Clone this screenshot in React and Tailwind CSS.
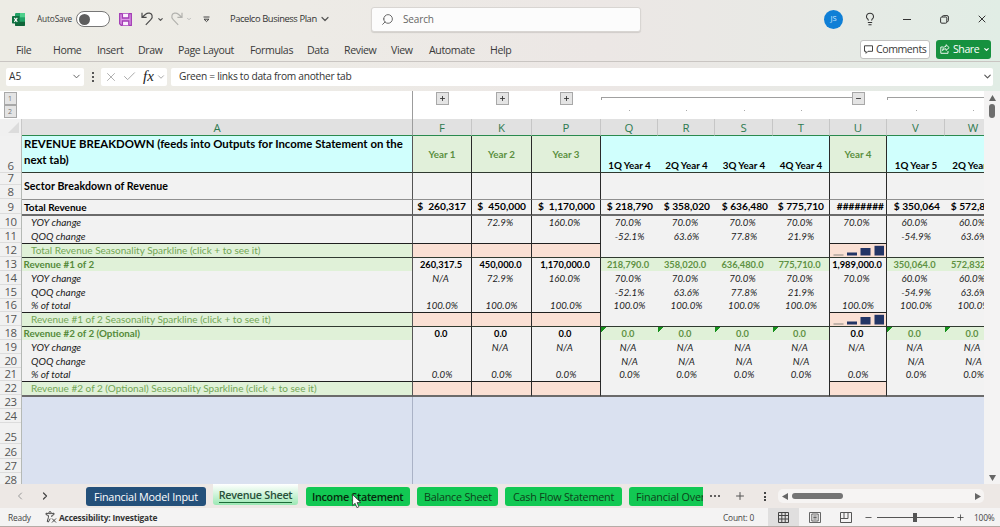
import React from "react";
import { ChevronDown, ChevronLeft, ChevronRight, X, Check, Search, Lightbulb, Minus, Plus } from "lucide-react";

const COLS = [
  { id: "F", w: "w-[59px]", kind: "year", line: true },
  { id: "K", w: "w-[60px]", kind: "year", line: true },
  { id: "P", w: "w-[69px]", kind: "year", line: true },
  { id: "Q", w: "w-[57px]", kind: "quarter" },
  { id: "R", w: "w-[57px]", kind: "quarter" },
  { id: "S", w: "w-[58px]", kind: "quarter" },
  { id: "T", w: "w-[57px]", kind: "quarter", line: true },
  { id: "U", w: "w-[57px]", kind: "year", line: true },
  { id: "V", w: "w-[58px]", kind: "quarter" },
  { id: "W", w: "w-[57px]", kind: "quarter" },
];

const yoy = ["70.0%", "70.0%", "70.0%", "70.0%", "70.0%", "60.0%", "60.0%"];
const qoq = ["", "", "", "-52.1%", "63.6%", "77.8%", "21.9%", "", "-54.9%", "63.6%"];
const na7 = Array(7).fill("N/A");

const ROWS = [
  { type: "head", h: "h-[37px]", label: "", cells: ["Year 1", "Year 2", "Year 3", "1Q Year 4", "2Q Year 4", "3Q Year 4", "4Q Year 4", "Year 4", "1Q Year 5", "2Q Year 5"], rule: "thin" },
  { type: "section", h: "h-[27px]", label: "Sector Breakdown of Revenue", cells: Array(10).fill(""), rule: "gray" },
  { type: "total", h: "h-[16px]", label: "Total Revenue", cells: ["$  260,317", "$  450,000", "$  1,170,000", "$ 218,790", "$ 358,020", "$ 636,480", "$ 775,710", "########", "$ 350,064", "$ 572,832"], rule: "thick" },
  { type: "pct", h: "h-[13px]", label: "YOY change", shift: true, cells: ["", "72.9%", "160.0%", ...yoy] },
  { type: "pct", h: "h-[15px]", label: "QOQ change", cells: qoq, rule: "years" },
  { type: "spark", h: "h-[14px]", label: "Total Revenue Seasonality Sparkline (click + to see it)", cells: Array(10).fill(""), chart: true, rule: "thin" },
  { type: "rev", h: "h-[13px]", label: "Revenue #1 of 2", cells: ["260,317.5", "450,000.0", "1,170,000.0", "218,790.0", "358,020.0", "636,480.0", "775,710.0", "1,989,000.0", "350,064.0", "572,832.0"] },
  { type: "pct", h: "h-[14px]", label: "YOY change", shift: true, cells: ["N/A", "72.9%", "160.0%", ...yoy] },
  { type: "pct", h: "h-[14px]", label: "QOQ change", cells: qoq },
  { type: "pct", h: "h-[14px]", label: "% of total", cells: Array(10).fill("100.0%"), rule: "years" },
  { type: "spark", h: "h-[14px]", label: "Revenue #1 of 2 Seasonality Sparkline (click + to see it)", cells: Array(10).fill(""), chart: true, rule: "thin" },
  { type: "rev", h: "h-[13px]", label: "Revenue #2 of 2 (Optional)", cells: Array(10).fill("0.0"), flag: true },
  { type: "pct", h: "h-[14px]", label: "YOY change", shift: true, cells: ["", "N/A", "N/A", ...na7] },
  { type: "pct", h: "h-[14px]", label: "QOQ change", cells: ["", "", "", "N/A", "N/A", "N/A", "N/A", "", "N/A", "N/A"] },
  { type: "pct", h: "h-[14px]", label: "% of total", cells: Array(10).fill("0.0%"), rule: "years" },
  { type: "spark", h: "h-[15px]", label: "Revenue #2 of 2 (Optional) Seasonality Sparkline (click + to see it)", cells: Array(10).fill(""), rule: "thick" },
];

const RULES = {
  thin: "border-b border-b-[#303a30]",
  gray: "border-b border-b-[#8f8f8f]",
  thick: "border-b-2 border-b-[#6b6b6b]",
};

function ruleFor(rule, year) {
  if (!rule) return "";
  if (rule === "years") return year ? "border-b border-b-[#1f1f1f]" : "pb-px";
  return RULES[rule];
}

const ROW_NUMBERS = [
  ["6", "h-[37px]"], ["7", "h-[12px]"], ["8", "h-[14px]"], ["9", "h-[15px]"], ["10", "h-[15px]"], ["11", "h-[14px]"],
  ["12", "h-[14px]"], ["13", "h-[14px]"], ["14", "h-[14px]"], ["15", "h-[14px]"], ["16", "h-[13px]"], ["17", "h-[14px]"],
  ["18", "h-[14px]"], ["19", "h-[14px]"], ["20", "h-[14px]"], ["21", "h-[13px]"], ["22", "h-[14px]"], ["23", "h-[14px]"],
  ["24", "h-[14px]"], ["25", "h-[21px]"], ["26", "h-[15px]"], ["27", "h-[14px]"], ["28", "h-[14px]"],
];

function labelStyle(type) {
  if (type === "section") return "pl-[2px] font-bold text-[10.6px] tracking-[0.08px] text-black bg-[#f2f2f2]";
  if (type === "total") return "pl-[2px] font-bold text-[10px] text-black bg-[#f2f2f2]";
  if (type === "pct") return "pl-[9px] italic text-[10px] text-[#1c1c1c] bg-[#f2f2f2]";
  if (type === "rev") return "pl-[1.5px] font-bold text-[9.8px] text-[#558a3a] bg-[#e0f1d8]";
  return "pl-[9px] text-[10px] text-[#72a655] bg-[#e0f1d8]";
}

function cellStyle(row, year) {
  if (row.type === "head") return year ? "items-center justify-center bg-[#e1f0da] font-bold text-[9.8px] text-[#5a8f3e]" : "items-end justify-center bg-[#d0fffd] font-bold text-[9.8px] text-black";
  if (row.type === "total") return "items-center justify-end bg-[#f2f2f2] font-bold text-[10.2px] text-black";
  if (row.type === "spark") return year ? "items-center bg-[#fae0d4]" : "bg-[#f2f2f2]";
  if (row.type === "rev") return year ? "items-center justify-center pr-[2px] bg-[#f2f2f2] font-bold text-[9.3px] text-black" : "items-center justify-center pr-[3px] bg-[#e0f1d8] font-bold text-[9.3px] text-[#5f9244]";
  return "items-center justify-center bg-[#f2f2f2] italic text-[9.7px] text-[#222]";
}

function SparkBars() {
  return (
    <svg className="block h-[13px] w-[56px]" viewBox="0 0 56 13">
      <rect x="3.5" y="10.5" width="10" height="1" fill="#8a8580" />
      <rect x="17" y="8.5" width="10" height="3" fill="#233566" />
      <rect x="30.5" y="4" width="10" height="7.5" fill="#233566" />
      <rect x="44.5" y="1.8" width="9.5" height="9.7" fill="#233566" />
    </svg>
  );
}

function SheetRow({ row }) {
  const total = row.type === "total";
  return (
    <div className={`flex shrink-0 ${row.h}`}>
      <div className={`flex w-[391px] shrink-0 items-center whitespace-nowrap border-r border-r-[#555] leading-[13px] ${row.type === "head" ? "bg-[#d0fffd] pb-[4px] pl-[2px] text-[11.4px] font-bold text-black" : labelStyle(row.type)} ${ruleFor(row.rule, true)}`}>
        {row.type === "head" ? (
          <span className="leading-[16px]">REVENUE BREAKDOWN (feeds into Outputs for Income Statement on the<br />next tab)</span>
        ) : row.label}
      </div>
      {COLS.map((c, i) => {
        const year = c.kind === "year";
        const quarterFlag = row.flag && !year;
        return (
          <div
            key={c.id}
            className={`flex shrink-0 whitespace-pre leading-[13px] ${c.w} ${cellStyle(row, year)} ${row.shift ? "pr-[3px]" : ""} ${total ? (c.id === "U" ? "pb-px pr-[2px]" : "pb-px pr-[5px]") : ""} ${c.line ? "border-r border-r-[#2a2a2a]" : ""} ${ruleFor(row.rule, year)} ${quarterFlag ? "bg-[linear-gradient(135deg,#16901c_3.6px,transparent_3.6px)]" : ""}`}
          >
            {row.chart && c.id === "U" ? <SparkBars /> : row.cells[i]}
          </div>
        );
      })}
    </div>
  );
}

function OutlineButton({ children }) {
  return <div className="flex h-[13px] w-[13px] shrink-0 items-center justify-center border border-[#a8a8a8] bg-[#e4e4e4] text-[#333]">{children}</div>;
}

function Outline() {
  return (
    <div className="flex h-[28px] shrink-0 bg-white">
      <div className="flex w-[413px] shrink-0 flex-col border-r border-r-[#9c9c9c] pl-[3.5px] pt-px">
        <OutlineButton><span className="text-[7px] leading-none text-[#777]">1</span></OutlineButton>
        <OutlineButton><span className="text-[7px] leading-none text-[#777]">2</span></OutlineButton>
      </div>
      {COLS.map((c) => {
        const collapsed = ["F", "K", "P"].includes(c.id);
        if (collapsed) {
          return (
            <div key={c.id} className={`flex shrink-0 justify-center pt-px ${c.w}`}>
              <OutlineButton><Plus size={7} strokeWidth={3} /></OutlineButton>
            </div>
          );
        }
        if (c.id === "U") {
          return (
            <div key={c.id} className={`flex shrink-0 pt-px ${c.w}`}>
              <div className="mt-[5px] h-px w-[22px] bg-[#a0a0a0]" />
              <OutlineButton><Minus size={7} strokeWidth={3} /></OutlineButton>
            </div>
          );
        }
        const first = c.id === "Q" || c.id === "V";
        return (
          <div key={c.id} className={`shrink-0 pt-[6px] ${c.w}`}>
            <div className={`h-[3px] border-t border-[#a0a0a0] ${first ? "border-l" : ""}`} />
            <div className="mx-auto mt-[10px] h-px w-px bg-[#aaa]" />
          </div>
        );
      })}
    </div>
  );
}

function ColumnHeaders() {
  return (
    <div className="flex h-[17px] shrink-0 text-[11.4px] leading-[16px] text-[#2d7a50]">
      <div className="flex w-[22px] shrink-0 items-end justify-end border-r border-r-[#c8c8c8] bg-[#f0f0f0] pb-[3px] pr-[2px]">
        <svg className="h-[11px] w-[11px]" viewBox="0 0 11 11"><path d="M11 0V11H0Z" fill="#dcdcdc" /></svg>
      </div>
      <div className="w-[391px] shrink-0 border-b border-r border-b-[#2a8a4e] border-r-[#9c9c9c] bg-[#e1e1e1] pt-px text-center">A</div>
      {COLS.map((c) => (
        <div key={c.id} className={`shrink-0 border-b border-r border-b-[#2a8a4e] border-r-[#c6c6c6] bg-[#e1e1e1] pt-px text-center ${c.w}`}>{c.id}</div>
      ))}
    </div>
  );
}

function TitleBar() {
  return (
    <div className="flex h-[38px] shrink-0 items-center text-[#333]">
      <div className="flex w-[37px] shrink-0 pl-[12px]">
        <svg className="h-[13px] w-[13px]" viewBox="0 0 13 13">
          <rect x="3" y="0" width="10" height="13" rx="1.2" fill="#21a366" />
          <rect x="8" y="0" width="5" height="4.3" fill="#4fd08c" />
          <path d="M3 8.7H13V12a1 1 0 0 1-1 1H4a1 1 0 0 1-1-1Z" fill="#11653a" />
          <rect x="0" y="3" width="7.6" height="7.6" rx="0.8" fill="#0f7040" />
          <path d="M2.3 4.8 5.3 8.8M5.3 4.8 2.3 8.8" stroke="#fff" strokeWidth="1.1" />
        </svg>
      </div>
      <div className="w-[39px] shrink-0 whitespace-nowrap text-[8.3px] tracking-[-0.15px] text-[#3c3c3c]">AutoSave</div>
      <div className="flex h-[16px] w-[34px] shrink-0 items-center rounded-full border border-[#777] bg-white pl-[2px]">
        <div className="h-[11px] w-[11px] rounded-full bg-[#5e5e5e]" />
      </div>
      <svg className="ml-[9px] h-[13px] w-[13px] shrink-0" viewBox="0 0 13 13" fill="none" stroke="#a33bb5" strokeWidth="1.3">
        <path d="M.7.7H12.3V12.3H2.2L.7 10.8Z" fill="#dc9ae6" />
        <path d="M3.4.7V5H9.8V.7" fill="#fbeffd" />
        <path d="M3.4 12.3V8H9.8V12.3" fill="#fbeffd" />
      </svg>
      <svg className="ml-[9px] h-[14px] w-[13px] shrink-0" viewBox="0 0 13 14" fill="none" stroke="#4b4b4b" strokeWidth="1.2">
        <path d="M1 .8V5.4H5.6M1.2 5.2 4.6 2.2C7 .3 10.2 1 11 3.3 11.6 5 11 6.4 9.8 7.6L4.8 12.8" />
      </svg>
      <ChevronDown className="ml-[3px] shrink-0 text-[#555]" size={7} strokeWidth={4} />
      <svg className="ml-[6px] h-[14px] w-[13px] shrink-0" viewBox="0 0 13 14" fill="none" stroke="#b2b2ae" strokeWidth="1.2">
        <path d="M12 .8V5.4H7.4M11.8 5.2 8.4 2.2C6 .3 2.8 1 2 3.3 1.4 5 2 6.4 3.2 7.6L8.2 12.8" />
      </svg>
      <ChevronDown className="ml-[3px] shrink-0 text-[#bbb]" size={6} strokeWidth={4} />
      <svg className="ml-[11px] h-[7px] w-[7px] shrink-0" viewBox="0 0 7 7" fill="none" stroke="#444" strokeWidth="1"><path d="M.5 1H6.5M1 3.2H6L3.5 5.6Z" /></svg>
      <div className="ml-[20px] w-[89px] shrink-0 whitespace-nowrap text-[9.4px] tracking-[-0.42px]">Pacelco Business Plan</div>
      <ChevronDown className="shrink-0 text-[#555]" size={12} strokeWidth={2.4} />
      <div className="ml-[40px] flex h-[25px] w-[270px] shrink-0 items-center rounded-[3px] border border-[#d8d5d2] bg-[#fcfcfc] pl-[9px] shadow-[0_1px_1px_rgba(0,0,0,0.12)]">
        <Search className="-scale-x-100 text-[#666]" size={13} strokeWidth={1.8} />
        <span className="ml-[9px] text-[10px] tracking-[-0.15px] text-[#666]">Search</span>
      </div>
      <div className="ml-[183px] flex h-[19px] w-[19px] shrink-0 items-center justify-center rounded-full bg-[#0f7fd6] text-[7.5px] text-[#cfe8ff]">JS</div>
      <Lightbulb className="ml-[20px] shrink-0 text-[#333]" size={14} strokeWidth={1.8} />
      <div className="ml-[26px] h-px w-[8px] shrink-0 bg-[#333]" />
      <svg className="ml-[29px] h-[9px] w-[9px] shrink-0" viewBox="0 0 9 9" fill="none" stroke="#333" strokeWidth="1"><rect x=".6" y="2" width="6.2" height="6.2" rx="1.2" /><path d="M2.4 1.9V1.6A1 1 0 0 1 3.4.6H7A1.4 1.4 0 0 1 8.4 2V5.6A1 1 0 0 1 7.4 6.6H7" /></svg>
      <X className="ml-[27px] shrink-0 text-[#333]" size={12} strokeWidth={2} />
    </div>
  );
}

const MENU = [["File", "w-[37px]"], ["Home", "w-[44px]"], ["Insert", "w-[41px]"], ["Draw", "w-[40px]"], ["Page Layout", "w-[72px]"], ["Formulas", "w-[57px]"], ["Data", "w-[37px]"], ["Review", "w-[47px]"], ["View", "w-[38px]"], ["Automate", "w-[61px]"], ["Help", "w-[371px]"]];

function MenuBar() {
  return (
    <div className="flex h-[24px] shrink-0 items-center border-b border-b-[#c9c5c2] pb-px pl-[16px] text-[10.6px] tracking-[-0.38px] text-[#3a3a3a]">
      {MENU.map(([name, w]) => <div key={name} className={`shrink-0 whitespace-nowrap pt-[3px] ${w}`}>{name}</div>)}
      <div className="-ml-px flex h-[19px] w-[70px] shrink-0 items-center whitespace-nowrap rounded-[3px] border border-[#c2c2c2] bg-white pl-[3px]">
        <svg className="mr-[3px] h-[9px] w-[9px] shrink-0" viewBox="0 0 9 9" fill="none" stroke="#444"><path d="M.5.8H8.5V6.3H4L2 8.3V6.3H.5Z" /></svg>
        <span className="pt-px tracking-[-0.45px]">Comments</span>
      </div>
      <div className="ml-[6px] flex h-[19px] w-[55px] shrink-0 items-center rounded-[3px] bg-[#16913f] pl-[4px] text-white">
        <svg className="mr-[3px] h-[10px] w-[10px] shrink-0" viewBox="0 0 10 10" fill="none" stroke="#fff" strokeWidth=".9"><path d="M3.5 3H.8V9.3H8V7M6 .7 9.2 3.6 6 6.4V4.8C4.4 4.8 3.4 5.3 2.6 6.6 2.8 4.2 4 2.6 6 2.4Z" /></svg>
        <span className="pt-px tracking-[-0.45px]">Share</span>
        <ChevronDown className="ml-[4px] shrink-0" size={7} strokeWidth={4} />
      </div>
    </div>
  );
}

function FormulaBar() {
  return (
    <div className="flex h-[29px] shrink-0 items-center px-[6px] text-[10.2px] text-[#333]">
      <div className="flex h-[18px] w-[78px] shrink-0 items-center justify-between rounded-[2px] bg-white pl-[3px] pr-[2px]">A5<ChevronDown size={11} strokeWidth={2} className="text-[#555]" /></div>
      <div className="ml-[8px] flex h-[10px] w-[2px] shrink-0 flex-col justify-between"><i className="h-[2px] w-[2px] bg-[#555]" /><i className="h-[2px] w-[2px] bg-[#555]" /><i className="h-[2px] w-[2px] bg-[#555]" /></div>
      <div className="ml-[7px] flex h-[18px] w-[66px] shrink-0 items-center rounded-[2px] bg-white pl-[3px]">
        <X size={14} strokeWidth={1.6} className="shrink-0 text-[#aaa]" />
        <Check size={15} strokeWidth={1.6} className="ml-[4px] shrink-0 text-[#aaa]" />
        <span className="ml-[6px] w-[12px] font-['Liberation_Serif',serif] text-[15px] italic leading-none text-[#222]">fx</span>
        <ChevronDown size={10} strokeWidth={2} className="ml-px shrink-0 text-[#999]" />
      </div>
      <div className="ml-[4px] flex h-[18px] w-[822px] shrink-0 items-center rounded-[2px] bg-white pl-[8px]">
        <span className="grow whitespace-nowrap tracking-[-0.27px]">Green = links to data from another tab</span>
        <ChevronDown size={11} strokeWidth={2.4} className="text-[#555]" />
      </div>
    </div>
  );
}

const SHEETS = [
  ["Income Statement", "ml-[8px] w-[104px] pl-[6px] rounded-[3px] text-[#062a0d] font-semibold tracking-[-0.3px]"],
  ["Balance Sheet", "ml-[7px] w-[81px] pl-[7px] rounded-[3px] text-[#0d4019] tracking-[-0.24px]"],
  ["Cash Flow Statement", "ml-[7px] w-[117px] pl-[8px] rounded-[3px] text-[#0d4019] tracking-[-0.24px]"],
  ["Financial Overview", "ml-[7px] w-[74px] pl-[7px] rounded-l-[3px] text-[#0d4019] tracking-[-0.15px]"],
];

function SheetTabs() {
  return (
    <div className="relative flex h-[24px] shrink-0 items-start bg-[#ede8e5] text-[10.8px] tracking-[-0.2px]">
      <ChevronLeft className="ml-[14px] mt-[6px] shrink-0 text-[#999]" size={12} strokeWidth={2} />
      <ChevronRight className="ml-[13px] mt-[6px] shrink-0 text-[#444]" size={12} strokeWidth={2.4} />
      <div className="ml-[35px] mt-[3px] flex h-[19px] w-[120px] shrink-0 items-center justify-center whitespace-nowrap rounded-[3px] bg-[#24507a] pt-[2px] text-white">Financial Model Input</div>
      <div className="ml-[7px] flex h-[21px] w-[85px] shrink-0 justify-center rounded-b-[3px] bg-gradient-to-b from-white to-[#9be8b4] pt-[3px]">
        <span className="h-[16px] whitespace-nowrap border-b border-b-[#1d6b38] text-[10.8px] font-semibold leading-[15px] tracking-[-0.28px] text-[#29503a]">Revenue Sheet</span>
      </div>
      {SHEETS.map(([name, cls]) => (
        <div key={name} className={`mt-[3px] flex h-[19px] shrink-0 items-center overflow-hidden whitespace-nowrap bg-[#12c853] pt-[2px] ${cls}`}>{name}</div>
      ))}
      <div className="ml-[7px] mt-[11px] flex shrink-0 gap-[2px]"><i className="h-[2px] w-[2px] rounded-full bg-[#333]" /><i className="h-[2px] w-[2px] rounded-full bg-[#333]" /><i className="h-[2px] w-[2px] rounded-full bg-[#333]" /></div>
      <Plus className="ml-[14px] mt-[6px] shrink-0 text-[#555]" size={12} strokeWidth={2} />
      <div className="ml-[18px] mt-[8px] flex shrink-0 flex-col gap-[1.5px]"><i className="h-[2px] w-[2px] bg-[#444]" /><i className="h-[2px] w-[2px] bg-[#444]" /><i className="h-[2px] w-[2px] bg-[#444]" /></div>
      <div className="ml-[12px] mt-[5px] flex h-[14px] w-[206px] shrink-0 items-center rounded-[5px] bg-[#f6f4f3] pl-[4px] pr-[3px]">
        <svg className="h-[7px] w-[6px]" viewBox="0 0 6 7"><path d="M6 0V7L0 3.5Z" fill="#666" /></svg>
        <div className="ml-[4px] h-[6px] w-[51px] rounded-full bg-[#747474]" />
        <svg className="ml-auto h-[7px] w-[6px]" viewBox="0 0 6 7"><path d="M0 0V7L6 3.5Z" fill="#666" /></svg>
      </div>
      <svg className="absolute left-[352px] top-[10px] h-[15px] w-[10px]" viewBox="0 0 10 15"><path d="M.6.6V11.6L3.1 9.3 4.9 13.6 6.9 12.8 5.1 8.6H8.8Z" fill="#fff" stroke="#333" strokeWidth=".8" /></svg>
    </div>
  );
}

function StatusBar() {
  return (
    <div className="flex h-[19px] shrink-0 items-center border-b border-b-[#b5aba6] bg-[#f4f3f3] pl-[8px] text-[8.4px] tracking-[-0.2px] text-[#444]">
      <div className="w-[37px] shrink-0 pt-[2px]">Ready</div>
      <svg className="h-[12px] w-[12px] shrink-0" viewBox="0 0 12 12" fill="none" stroke="#333" strokeWidth=".9"><circle cx="5" cy="1.7" r="1.1" /><path d="M3.8 2.6 1 2.2V3.6L3.4 4.5V6.5L2.2 10.5 3.4 11 5.2 7.6M6.2 2.6 9 2.2V3.6L6.8 4.5V6M7 7.5 11 11.5M11 7.5 7 11.5" /></svg>
      <div className="ml-[2px] w-[664px] shrink-0 pt-[2px] font-bold tracking-[-0.18px] text-[#333]">Accessibility: Investigate</div>
      <div className="w-[45px] shrink-0 whitespace-nowrap pt-[2px]">Count: 0</div>
      <div className="flex h-full w-[31px] shrink-0 items-center justify-center bg-[#e0dfdf]">
        <svg className="h-[11px] w-[11px]" viewBox="0 0 11 11" fill="none" stroke="#444"><path d="M.5.5H10.5V10.5H.5ZM.5 3.5H10.5M.5 7H10.5M3.8.5V10.5M7.2.5V10.5" /></svg>
      </div>
      <svg className="ml-[10px] h-[11px] w-[12px] shrink-0" viewBox="0 0 12 11" fill="none" stroke="#555" strokeWidth=".9"><path d="M.5.5H11.5V10.5H.5ZM2.8 2H9.2V9H2.8ZM4.3 4H7.7M4.3 5.5H7.7M4.3 7H7.7" /></svg>
      <svg className="ml-[19px] h-[11px] w-[12px] shrink-0" viewBox="0 0 12 11" fill="none" stroke="#555"><path d="M.5.5H11.5V10.5H.5ZM4 .5V6.5H.5M4 6.5H8V.5" /></svg>
      <Minus className="ml-[12px] shrink-0" size={9} strokeWidth={2.2} />
      <div className="ml-[4px] flex h-[9px] w-[77px] shrink-0 items-center">
        <div className="h-px w-[36px] bg-[#555]" /><div className="h-[9px] w-[4px] bg-[#555]" /><div className="h-px w-[37px] bg-[#555]" />
      </div>
      <Plus className="ml-[2px] shrink-0" size={9} strokeWidth={2.2} />
      <div className="ml-[9px] whitespace-nowrap pt-[2px]">100%</div>
    </div>
  );
}

export default function App() {
  return (
    <div className="flex h-[527px] w-[1000px] flex-col overflow-hidden bg-[linear-gradient(90deg,#edece5_0%,#edebe6_30%,#ece7e5_60%,#e8e9e5_80%,#e1ede5_100%)] font-['Open_Sans','Noto_Sans',sans-serif]">
      <TitleBar />
      <MenuBar />
      <FormulaBar />
      <div className="flex h-[393px] shrink-0">
        <div className="flex w-[984px] shrink-0 flex-col overflow-hidden">
          <Outline />
          <ColumnHeaders />
          <div className="flex h-[348px] shrink-0 overflow-hidden">
            <div className="w-[22px] shrink-0 border-r border-r-[#b5b9b5] bg-[#f1f1f1] text-[11.4px] tracking-[-0.6px] text-[#555]">
              {ROW_NUMBERS.map(([n, h]) => (
                <div key={n} className={`flex items-end justify-center border-b border-b-[#dcdcdc] leading-[13px] ${h}`}>{n}</div>
              ))}
            </div>
            <div className="flex w-[962px] shrink-0 flex-col overflow-hidden font-['Lato',sans-serif]">
              {ROWS.map((row, i) => <SheetRow key={i} row={row} />)}
              <div className="flex grow bg-[#dae1f0]">
                <div className="w-[391px] border-r border-r-[#aab2c6]" />
              </div>
            </div>
          </div>
        </div>
        <div className="flex w-[16px] shrink-0 flex-col items-center bg-[#f4f3f3] pb-[3px] pt-[4px]">
          <svg className="h-[6px] w-[7px]" viewBox="0 0 7 6"><path d="M0 6H7L3.5 0Z" fill="#666" /></svg>
          <div className="mt-[3px] h-[14px] w-[6px] rounded-full bg-[#6e6e6e]" />
          <svg className="mt-auto h-[6px] w-[7px]" viewBox="0 0 7 6"><path d="M0 0H7L3.5 6Z" fill="#666" /></svg>
        </div>
      </div>
      <SheetTabs />
      <StatusBar />
    </div>
  );
}
